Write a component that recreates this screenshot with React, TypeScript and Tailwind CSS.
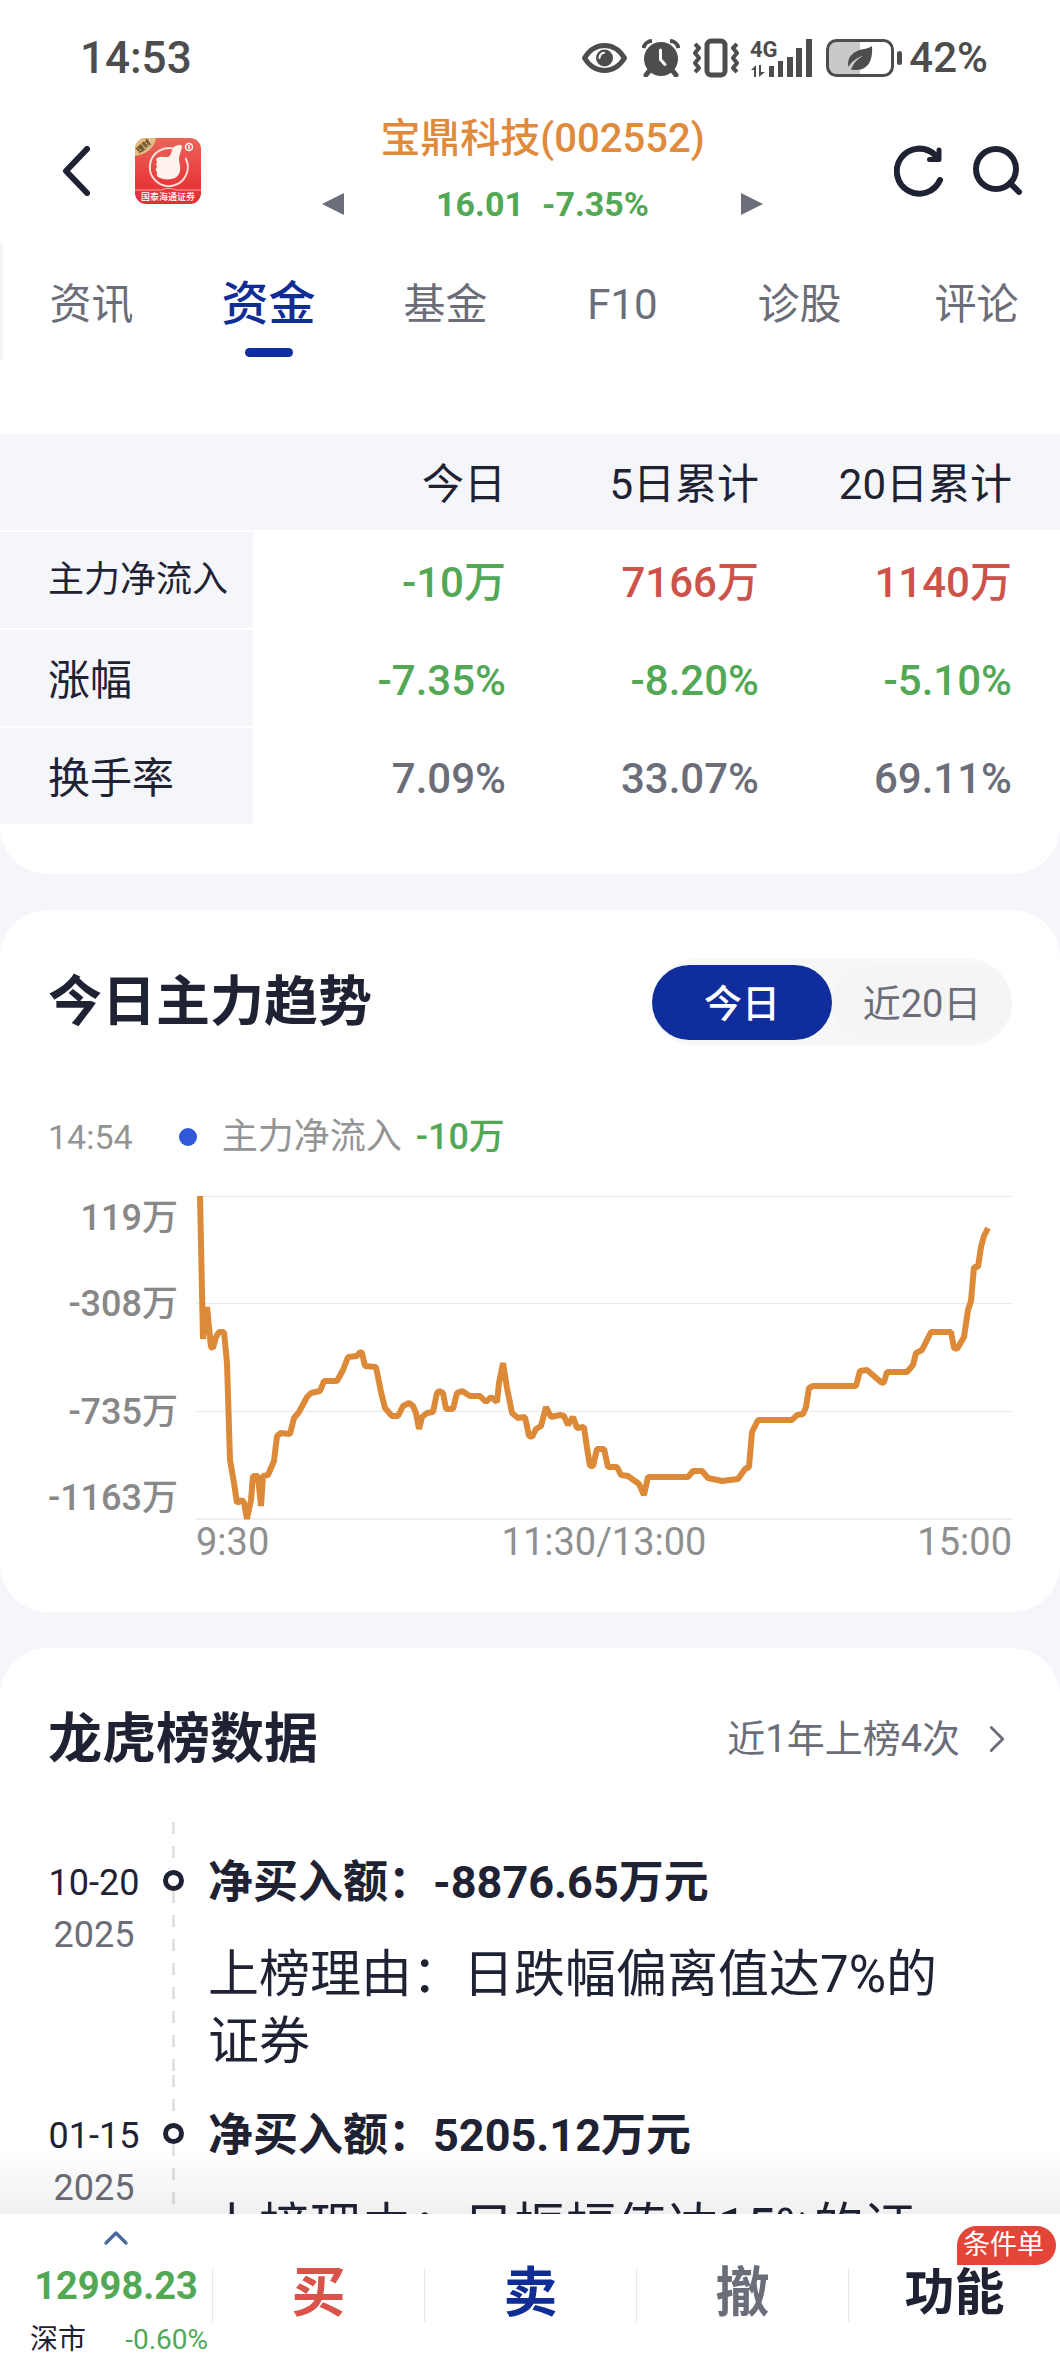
import { ChevronRight, ChevronUp } from "lucide-react";
import { useState } from "react";

const UP = "text-[#cd524a]";
const DOWN = "text-[#52a855]";
const FLAT = "text-[#6b6d78]";

const tabs = ["资讯", "资金", "基金", "F10", "诊股", "评论"];

const flowRows = [
  {
    label: "主力净流入",
    small: true,
    cells: [
      { text: "-10万", tone: DOWN },
      { text: "7166万", tone: UP },
      { text: "1140万", tone: UP },
    ],
  },
  {
    label: "涨幅",
    small: false,
    cells: [
      { text: "-7.35%", tone: DOWN },
      { text: "-8.20%", tone: DOWN },
      { text: "-5.10%", tone: DOWN },
    ],
  },
  {
    label: "换手率",
    small: false,
    cells: [
      { text: "7.09%", tone: FLAT },
      { text: "33.07%", tone: FLAT },
      { text: "69.11%", tone: FLAT },
    ],
  },
];

// x: position in the trading day, y: distance from the top grid line
const trend =
  "4,0 7,143 11,111 15,151 17,152 20,141 23,136 28,136 31,167 34,264 38,287 41,307 46,304 48,307 51,323 55,304 57,280 62,280 65,310 67,280 72,279 78,265 81,240 85,237 94,238 98,222 103,216 111,201 115,197 124,195 128,185 141,185 147,174 152,161 161,160 164,156 166,157 169,170 180,171 185,196 189,212 196,220 202,220 207,210 213,207 217,210 220,217 223,233 226,221 231,217 237,216 241,197 243,195 247,197 250,213 257,213 261,197 266,195 274,200 284,200 290,206 295,201 301,206 303,187 307,167 311,192 316,217 322,222 329,221 333,240 336,241 340,233 345,230 350,211 355,221 364,219 368,220 372,229 377,221 381,232 388,231 391,252 394,270 397,270 401,253 408,253 412,271 421,271 425,279 432,280 443,288 448,299 452,281 492,281 497,275 506,275 512,282 526,285 542,283 549,273 553,271 556,236 562,224 596,224 601,219 607,218 610,211 613,192 617,190 660,190 664,175 671,174 686,187 688,186 691,176 711,176 717,169 720,157 726,154 735,136 755,136 758,152 761,153 768,141 772,114 775,105 778,71 782,71 785,51 788,40 792,32";

const records = [
  {
    day: "10-20",
    year: "2025",
    amount: "-8876.65万元",
    reason: "日跌幅偏离值达7%的证券",
  },
  {
    day: "01-15",
    year: "2025",
    amount: "5205.12万元",
    reason: "日振幅值达15%的证券",
  },
];

function StatusIcons() {
  return (
    <div className="flex items-center text-[#4d4d4d]">
      <svg width="45" height="30" viewBox="0 0 45 30" fill="none">
        <path
          d="M2.500 15C8 6 15 2.500 22.500 2.500S37 6 42.500 15C37 24 30 27.500 22.500 27.500S8 24 2.500 15Z"
          stroke="currentColor"
          strokeWidth="5"
          strokeLinejoin="round"
        />
        <circle cx="22.500" cy="15" r="8.500" fill="currentColor" />
        <path
          d="M17.500 15a5.500 5.500 0 0 1 4.500-5.200"
          stroke="#fff"
          strokeWidth="2"
          strokeLinecap="round"
        />
      </svg>
      <svg className="ml-[15px]" width="38" height="38" viewBox="0 0 38 38" fill="none">
        <circle cx="19" cy="20" r="17" fill="currentColor" />
        <path
          d="M1.500 9C2.500 5 6 2 10 2M36.500 9C35.500 5 32 2 28 2"
          stroke="currentColor"
          strokeWidth="4"
        />
        <path
          d="m8 31-4 5m26-5 4 5"
          stroke="currentColor"
          strokeWidth="5"
          strokeLinecap="round"
        />
        <path
          d="M18.500 11v9.500l4.500 5"
          stroke="#fff"
          strokeWidth="3"
          strokeLinecap="round"
          strokeLinejoin="round"
        />
      </svg>
      <svg className="ml-[13px]" width="46" height="40" viewBox="0 0 46 40" fill="none">
        <rect
          x="14"
          y="3"
          width="18"
          height="34"
          rx="4"
          stroke="currentColor"
          strokeWidth="5"
        />
        <path
          d="m2 6 4 4-4 5 4 5-4 5 4 5-4 4M44 6l-4 4 4 5-4 5 4 5-4 5 4 4"
          stroke="currentColor"
          strokeWidth="4"
          strokeLinejoin="round"
        />
      </svg>
      <svg
        className="ml-[11px] overflow-visible"
        width="62"
        height="40"
        viewBox="0 0 62 40"
      >
        <text x="0" y="19" fontSize="22" fontWeight="700" fill="currentColor">
          4G
        </text>
        <path
          d="M19 28h5v11h-5zM28 23h5v16h-5zM37 19h6v20h-6zM46 10h6v29h-6zM56 1h6v38h-6z"
          fill="currentColor"
        />
        <path d="m1 32 5-5v12H4v-7zM9 27h2v7h4l-6 5z" fill="currentColor" />
      </svg>
      <svg className="ml-[14px]" width="77" height="38" viewBox="0 0 77 38" fill="none">
        <path d="M10 2h24v34H10a8 8 0 0 1-8-8V10a8 8 0 0 1 8-8Z" fill="#c9c9c9" />
        <rect
          x="1.500"
          y="1.500"
          width="65"
          height="35"
          rx="9"
          stroke="currentColor"
          strokeWidth="3"
        />
        <rect x="71" y="12" width="5" height="14" rx="2.500" fill="currentColor" />
        <path
          d="M46 7c1 13-3 24-16 24-2 0-3 0-5-.5C27 25 31 20 37 17c-7 2-12 6-14.500 11C20 16 31 11 38 10c4-.6 6-1.500 8-3Z"
          fill="currentColor"
        />
      </svg>
      <span className="ml-1.5 text-[42px] leading-[48px] font-medium">42%</span>
    </div>
  );
}

function BrokerLogo() {
  return (
    <svg width="66" height="66" viewBox="0 0 66 66">
      <defs>
        <linearGradient id="logo-red" x1="0" y1="0" x2="0" y2="1">
          <stop offset="0" stopColor="#ea6557" />
          <stop offset="0.7" stopColor="#e8383a" />
          <stop offset="1" stopColor="#e03033" />
        </linearGradient>
        <clipPath id="logo-clip">
          <rect width="66" height="66" rx="11" />
        </clipPath>
      </defs>
      <g clipPath="url(#logo-clip)">
        <rect width="66" height="66" fill="url(#logo-red)" />
        <path d="M0 0h21C20 9 11 17 0 18Z" fill="#e3bd84" />
        <text
          x="9"
          y="11"
          fontSize="8"
          fontWeight="700"
          textAnchor="middle"
          fill="#5c3d1c"
          transform="rotate(-40 9 9)"
        >
          理财
        </text>
        <path
          d="M41 11.500A19 19 0 1 0 50.500 20"
          fill="none"
          stroke="#fbe0dc"
          strokeWidth="2"
        />
        <path
          d="M22 20c3-2 7-1 11-1 3-1 3-5 5-9 2-3 8-4 9-2 0 4-3 8-3 13 0 4 2 7 1 12-1 5-5 8-9 8-5 1-9 0-13-2-2-2-1-3-1-5-2-2-1-4 0-5-1-2-1-4 0-5-1-2-1-3 0-4Z"
          fill="#fdf3ec"
        />
        <circle cx="54" cy="9" r="3.500" fill="none" stroke="#fff" strokeWidth="1.500" />
        <path d="M54 7v4" stroke="#fff" strokeWidth="1.500" />
        <path
          d="M0 52h26l5-1.500h5L41 52h25"
          fill="none"
          stroke="#f6a49e"
          strokeWidth="1"
        />
        <text
          x="33"
          y="62"
          fontSize="9"
          fontWeight="500"
          textAnchor="middle"
          fill="#fff"
        >
          国泰海通证券
        </text>
      </g>
    </svg>
  );
}

function StockHeader() {
  return (
    <div className="grid h-[110px] grid-cols-[1fr_auto_1fr] items-center pr-[37px] pl-[62px] text-[#1f2233]">
      <div className="flex items-center gap-[45px]">
        <button type="button" aria-label="返回">
          <svg width="28" height="50" viewBox="0 0 28 50" fill="none">
            <path
              d="M25 3 4 25l21 22"
              stroke="currentColor"
              strokeWidth="6"
              strokeLinecap="round"
              strokeLinejoin="round"
            />
          </svg>
        </button>
        <BrokerLogo />
      </div>
      <div className="w-[441px]">
        <h1 className="mb-[21px] text-center text-[40px] leading-[44px] font-medium whitespace-nowrap text-[#e08a3c]">
          宝鼎科技(002552)
        </h1>
        <div className="flex items-center justify-between">
          <button type="button" aria-label="上一只">
            <svg width="22" height="22" viewBox="0 0 22 22" fill="#6b6d78">
              <path d="M0 11 22 0v22z" />
            </svg>
          </button>
          <p className="flex gap-[18px] text-[34px] leading-[44px] font-bold text-[#52a855]">
            <span>16.01</span>
            <span>-7.35%</span>
          </p>
          <button type="button" aria-label="下一只">
            <svg width="22" height="22" viewBox="0 0 22 22" fill="#6b6d78">
              <path d="M22 11 0 0v22z" />
            </svg>
          </button>
        </div>
      </div>
      <div className="flex items-center justify-end gap-[29px]">
        <button type="button" aria-label="刷新">
          <svg width="50" height="52" viewBox="0 0 50 52" fill="none">
            <path
              d="M46 35A22.500 22.500 0 1 1 41 10"
              stroke="currentColor"
              strokeWidth="6"
              strokeLinecap="round"
            />
            <path
              d="M45 5v9.500H35.500"
              stroke="currentColor"
              strokeWidth="5"
              strokeLinecap="round"
              strokeLinejoin="round"
            />
            <path d="M36 14 45 6v9z" fill="currentColor" />
          </svg>
        </button>
        <button type="button" aria-label="搜索">
          <svg width="50" height="50" viewBox="0 0 50 50" fill="none">
            <circle cx="23" cy="23" r="20" stroke="currentColor" strokeWidth="6" />
            <path
              d="m37 37 9 9"
              stroke="currentColor"
              strokeWidth="6"
              strokeLinecap="round"
            />
          </svg>
        </button>
      </div>
    </div>
  );
}

function FlowTable() {
  return (
    <div className="mt-[74px] overflow-hidden pr-12">
      <table className="w-full table-fixed border-separate border-spacing-0 text-right text-[42px] leading-[48px] text-[#1f2233]">
        <thead>
          <tr className="h-24 bg-[#f4f6fa]">
            <td />
            <th className="pt-1.5 font-normal">今日</th>
            <th className="pt-1.5 font-normal">5日累计</th>
            <th className="pt-1.5 font-normal whitespace-nowrap shadow-[48px_0_0_#f4f6fa]">
              20日累计
            </th>
          </tr>
        </thead>
        <tbody>
          {flowRows.map((row) => (
            <tr key={row.label} className="h-[98px]">
              <th
                className={
                  row.small
                    ? "border-t-2 border-white bg-[#f4f6fa] pl-12 text-left text-[36px] font-normal whitespace-nowrap"
                    : "border-t-2 border-white bg-[#f4f6fa] pt-1.5 pl-12 text-left font-normal whitespace-nowrap"
                }
              >
                {row.label}
              </th>
              {row.cells.map((c) => (
                <td key={c.text} className={`pt-2 font-medium ${c.tone}`}>
                  {c.text}
                </td>
              ))}
            </tr>
          ))}
        </tbody>
      </table>
    </div>
  );
}

function TrendCard() {
  const [range, setRange] = useState("今日");

  return (
    <section className="rounded-[48px] bg-white px-12 pt-[49px] pb-12">
      <div className="flex items-center justify-between">
        <h2 className="text-[54px] leading-[76px] font-bold text-[#1f2233]">
          今日主力趋势
        </h2>
        <div className="flex items-center rounded-full bg-[#f7f7f8] py-1.5">
          {["今日", "近20日"].map((r) => (
            <button
              key={r}
              type="button"
              onClick={() => setRange(r)}
              className={
                r === range
                  ? "h-[75px] w-[180px] rounded-full bg-[#102d9e] pt-1 text-[38px] font-medium text-white"
                  : "h-[75px] w-[180px] rounded-full bg-[#f5f5f5] pt-1 text-[38px] text-[#6b6d78]"
              }
            >
              {r}
            </button>
          ))}
        </div>
      </div>
      <div className="mt-[67px] flex items-center text-[36px] leading-[48px] text-[#949494]">
        <span className="text-[34px]">14:54</span>
        <span className="ml-[46px] size-[18px] rounded-full bg-[#3158d8]" />
        <span className="ml-[25px]">主力净流入</span>
        <span className="ml-3.5 font-medium text-[#52a855]">-10万</span>
      </div>
      <div className="mt-[35px] grid grid-cols-[130px_1fr] gap-x-[18px]">
        <div className="flex flex-col text-right text-[36px] leading-[44px] font-medium whitespace-nowrap text-[#888888]">
          <span className="flex flex-1 items-start justify-end">119万</span>
          <span className="flex flex-2 items-center justify-end">-308万</span>
          <span className="flex flex-2 items-center justify-end">-735万</span>
          <span className="flex flex-1 items-end justify-end">-1163万</span>
        </div>
        <svg
          className="h-[324px] w-full"
          viewBox="0 0 816 324"
          preserveAspectRatio="none"
          fill="none"
        >
          <path
            d="M0 .5h816M0 107.500h816M0 215.500h816"
            stroke="#e9e9e9"
            strokeWidth="1"
          />
          <path d="M0 323h816" stroke="#eeeeee" strokeWidth="2" />
          <polyline
            points={trend}
            stroke="#dd8a38"
            strokeWidth="6"
            strokeLinejoin="bevel"
          />
        </svg>
        <div className="col-start-2 grid grid-cols-3 text-[38px] leading-[44px] text-[#8f8f8f]">
          <span>9:30</span>
          <span className="text-center">11:30/13:00</span>
          <span className="text-right">15:00</span>
        </div>
      </div>
    </section>
  );
}

function DragonTigerCard() {
  return (
    <section className="rounded-t-[48px] bg-white px-12 pt-[54px] text-[#1f2233]">
      <div className="flex h-[74px] items-center justify-between">
        <h2 className="text-[54px] font-bold">龙虎榜数据</h2>
        <a
          href="#records"
          className="-mr-2 flex items-center text-[38px] text-[#6b6d78]"
        >
          近1年上榜4次
          <ChevronRight className="ml-3.5" size={46} strokeWidth={1.5} />
        </a>
      </div>
      <ul id="records" className="mt-[46px]">
        {records.map((r) => (
          <li key={r.day} className="flex">
            <div className="w-[92px] pt-[35px] text-center text-[36px] leading-[52px] whitespace-nowrap">
              <p>{r.day}</p>
              <p className="text-[#6b6d78]">{r.year}</p>
            </div>
            <div className="mr-6 ml-[23px] flex w-[21px] flex-col items-center">
              <span className="h-12 w-[3px] bg-[repeating-linear-gradient(to_bottom,#e2e2e2_0_12px,transparent_12px_24px)]" />
              <span className="size-[21px] rounded-full border-[5px] border-[#1f2233]" />
              <span className="w-[3px] flex-1 bg-[repeating-linear-gradient(to_bottom,#e2e2e2_0_12px,transparent_12px_24px)]" />
            </div>
            <div className="flex-1 pt-[31px] pr-[52px]">
              <p className="text-[45px] leading-[60px] font-bold">
                净买入额：{r.amount}
              </p>
              <p className="mt-7 text-[51px] leading-[67px]">
                上榜理由：{r.reason}
              </p>
            </div>
          </li>
        ))}
      </ul>
    </section>
  );
}

function TradeBar() {
  return (
    <nav className="relative grid h-[162px] shrink-0 grid-cols-5 bg-white text-[54px] font-bold">
      <div className="pointer-events-none absolute inset-x-0 bottom-full h-16 bg-linear-to-t from-black/6 to-transparent" />
      <button type="button" className="flex flex-col items-center pt-1 pl-5">
        <ChevronUp className="text-[#4a6a9f]" size={40} strokeWidth={2} />
        <span className="text-[38px] leading-[56px] text-[#52a855]">12998.23</span>
        <span className="mt-2 flex w-full justify-between pr-1 pl-2.5 text-[28px] leading-[36px] font-normal">
          <span className="text-[#1f2233]">深市</span>
          <span className="text-[#52a855]">-0.60%</span>
        </span>
      </button>
      <TradeButton label="买" tone="text-[#d9534a]" />
      <TradeButton label="卖" tone="text-[#102d96]" />
      <TradeButton label="撤" tone="text-[#6b6d78]" />
      <div className="relative">
        <TradeButton label="功能" tone="w-full text-[50px] text-[#1f2233]" />
        <span className="absolute top-3 right-1 rounded-[20px] rounded-bl-none bg-[#e34639] pr-3 pl-1.5 text-[27px] leading-[39px] font-normal text-white">
          条件单
        </span>
      </div>
    </nav>
  );
}

function TradeButton({ label, tone }: { label: string; tone: string }) {
  return (
    <button type="button" className={`flex h-[162px] items-center ${tone}`}>
      <span className="h-[54px] w-px bg-[#e8e8e8]" />
      <span className="flex-1 pb-1">{label}</span>
    </button>
  );
}

export default function App() {
  const [tab, setTab] = useState("资金");

  return (
    <div className="flex h-screen flex-col bg-[#f4f6fa] font-['Roboto','Noto_Sans_CJK_SC',sans-serif]">
      <main className="flex min-h-0 flex-1 flex-col gap-9 overflow-hidden">
        <section className="shrink-0 rounded-b-[48px] bg-white pb-[50px]">
          <div className="flex h-[116px] items-center justify-between pr-[72px] pl-20">
            <span className="text-[44px] leading-[48px] font-medium text-[#4d4d4d]">
              14:53
            </span>
            <StatusIcons />
          </div>
          <StockHeader />
          <div className="mt-[17px] flex overflow-hidden border-l-[3px] border-[#f4f6fa]">
            {tabs.map((t) => (
              <button
                key={t}
                type="button"
                onClick={() => setTab(t)}
                className={
                  t === tab
                    ? "relative h-[117px] w-[177px] flex-none pt-1.5 text-[47px] font-medium text-[#102d96]"
                    : "relative h-[117px] w-[177px] flex-none pt-1.5 text-[42px] text-[#6b6d78]"
                }
              >
                {t}
                {t === tab && (
                  <span className="absolute bottom-[3px] left-1/2 h-[9px] w-12 -translate-x-1/2 rounded-full bg-[#102d9e]" />
                )}
              </button>
            ))}
          </div>
          <FlowTable />
        </section>
        <TrendCard />
        <DragonTigerCard />
      </main>
      <TradeBar />
    </div>
  );
}
